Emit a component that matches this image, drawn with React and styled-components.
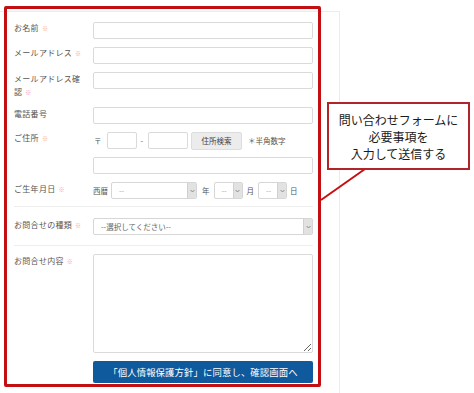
import styled, { createGlobalStyle } from "styled-components";

const Global = createGlobalStyle`
  html, body {
    margin: 0;
    padding: 0;
    background: #fff;
  }
  body {
    font-family: "Noto Sans CJK JP", "Noto Sans", sans-serif;
  }
`;

const Page = styled.div`
  position: relative;
  width: 474px;
  height: 393px;
  overflow: hidden;
`;

// Panel del formulario (borde gris tenue arriba y a la derecha)
const Panel = styled.form`
  box-sizing: border-box;
  margin-top: 11px;
  width: 340px;
  height: 382px;
  border-top: 1px solid #ececec;
  border-right: 1px solid #ececec;
  padding: 10px 26px 0 14px;
`;

const Row = styled.div`
  display: grid;
  grid-template-columns: 79px 1fr;
  margin-top: ${({ $mt = 0 }) => $mt}px;
  margin-bottom: ${({ $gap = 8 }) => $gap}px;
  ${({ $divided }) =>
    $divided &&
    `
    border-top: 1px solid #eeeeee;
  `}
  padding-top: ${({ $pad = 0 }) => $pad}px;
`;

const Label = styled.label`
  font-size: 8px;
  line-height: 12.5px;
  letter-spacing: 0.3px;
  color: #555;
  padding-right: 8px;
  padding-top: ${({ $top = 0 }) => $top}px;
`;

const Req = styled.span`
  color: #f2a3a3;
  font-size: 6px;
  margin-left: 3px;
`;

const Field = styled.div`
  display: flex;
  flex-direction: column;
  gap: 8px;
`;

const Input = styled.input`
  box-sizing: border-box;
  width: ${({ $w }) => ($w ? `${$w}px` : "100%")};
  height: 17px;
  margin: 0;
  border: 1px solid #dadada;
  border-radius: 2px;
  background: #fff;
  padding: 0 4px;
  font: inherit;
  font-size: 8px;
`;

const Inline = styled.div`
  display: flex;
  align-items: center;
  height: 17px;
  font-size: 7.5px;
  color: #555;
`;

const Mark = styled.span`
  margin: 0 ${({ $r = 4 }) => $r}px 0 ${({ $l = 0 }) => $l}px;
`;

const SearchButton = styled.button`
  box-sizing: border-box;
  height: 18px;
  width: 51px;
  margin: 0 6px 0 3px;
  padding: 0;
  border: 1px solid #dddddd;
  border-radius: 2px;
  background: #ececec;
  color: #444;
  font: inherit;
  font-size: 7.5px;
`;

const SelectWrap = styled.div`
  box-sizing: border-box;
  display: flex;
  width: ${({ $w }) => ($w ? `${$w}px` : "100%")};
  height: 17px;
  border: 1px solid #d6d6d6;
  border-radius: 2px;
  background: #fff;
  overflow: hidden;
`;

const SelectValue = styled.span`
  flex: 1;
  display: flex;
  align-items: center;
  padding-left: 7px;
  font-size: 7.5px;
  color: ${({ $muted }) => ($muted ? "#aaa" : "#666")};
`;

const Arrow = styled.span`
  width: 8px;
  display: flex;
  align-items: center;
  justify-content: center;
  background: #e2e2e2;
  border-left: 1px solid #d0d0d0;
`;

const TextArea = styled.textarea`
  box-sizing: border-box;
  display: block;
  width: 100%;
  height: 99px;
  margin: 0;
  border: 1px solid #dadada;
  border-radius: 2px;
  resize: both;
  font: inherit;
`;

const Submit = styled.button`
  box-sizing: border-box;
  width: 100%;
  height: 22px;
  margin-top: 8px;
  border: none;
  border-radius: 2px;
  background: #0f5a9c;
  color: #fff;
  font: inherit;
  font-size: 9.4px;
  letter-spacing: 0.1px;
`;

// Anotaciones dibujadas sobre la captura
const Frame = styled.div`
  position: absolute;
  left: 4px;
  top: 6px;
  width: 317px;
  height: 381px;
  box-sizing: border-box;
  border: 3.5px solid #c40f12;
  border-radius: 2px;
  pointer-events: none;
`;

const Callout = styled.div`
  position: absolute;
  left: 327px;
  top: 102px;
  width: 143px;
  height: 68px;
  box-sizing: border-box;
  border: 2px solid #b0252a;
  background: #fff;
  display: flex;
  flex-direction: column;
  align-items: center;
  justify-content: center;
  font-size: 12px;
  line-height: 17px;
  color: #1a1a1a;
`;

const Tail = styled.svg`
  position: absolute;
  left: 0;
  top: 0;
  pointer-events: none;
`;

const Chevron = () => (
  <svg width="5" height="4" viewBox="0 0 5 4">
    <path d="M0.6 1 L2.5 3 L4.4 1" fill="none" stroke="#777" strokeWidth="0.8" />
  </svg>
);

const Select = ({ w, value, muted }) => (
  <SelectWrap $w={w}>
    <SelectValue $muted={muted}>{value}</SelectValue>
    <Arrow>
      <Chevron />
    </Arrow>
  </SelectWrap>
);

export default function App() {
  return (
    <Page>
      <Global />
      <Panel onSubmit={(e) => e.preventDefault()}>
        <Row>
          <Label>
            お名前<Req>※</Req>
          </Label>
          <Input />
        </Row>
        <Row>
          <Label>
            メールアドレス<Req>※</Req>
          </Label>
          <Input />
        </Row>
        <Row>
          <Label $top={1}>
            メールアドレス確認<Req>※</Req>
          </Label>
          <Input />
        </Row>
        <Row>
          <Label $top={1}>電話番号</Label>
          <Input />
        </Row>
        <Row>
          <Label>
            ご住所<Req>※</Req>
          </Label>
          <Field>
            <Inline>
              <Mark $l={1} $r={5}>〒</Mark>
              <Input $w={30} />
              <Mark $l={4} $r={5}>-</Mark>
              <Input $w={40} />
              <SearchButton type="button">住所検索</SearchButton>
              <span>＊半角数字</span>
            </Inline>
            <Input />
          </Field>
        </Row>
        <Row $gap={0}>
          <Label $top={1}>
            ご生年月日<Req>※</Req>
          </Label>
          <Inline>
            <Mark $r={3}>西暦</Mark>
            <Select w={86} value="--" muted />
            <Mark $l={5} $r={4}>年</Mark>
            <Select w={29} value="--" muted />
            <Mark $l={4} $r={4}>月</Mark>
            <Select w={29} value="--" muted />
            <Mark $l={3}>日</Mark>
          </Inline>
        </Row>
        <Row $divided $mt={7} $pad={11} $gap={0}>
          <Label $top={1}>
            お問合せの種類<Req>※</Req>
          </Label>
          <Select value="--選択してください--" />
        </Row>
        <Row $divided $mt={10} $pad={8} $gap={0}>
          <Label $top={1}>
            お問合せ内容<Req>※</Req>
          </Label>
          <div>
            <TextArea />
            <Submit type="submit">「個人情報保護方針」に同意し、確認画面へ</Submit>
          </div>
        </Row>
      </Panel>

      <Frame />
      <Tail width="474" height="393">
        <line x1="365" y1="169" x2="321" y2="200" stroke="#c40f12" strokeWidth="2" />
      </Tail>
      <Callout>
        <span>問い合わせフォームに</span>
        <span>必要事項を</span>
        <span>入力して送信する</span>
      </Callout>
    </Page>
  );
}
